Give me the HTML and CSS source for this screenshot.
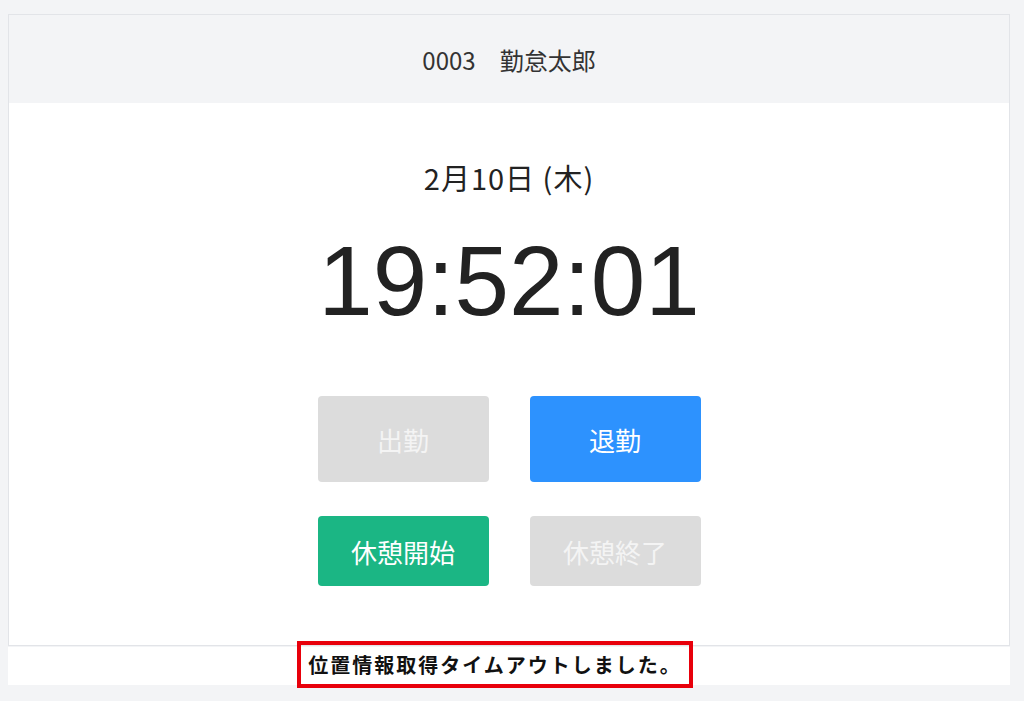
FILE: index.html
```html
<!DOCTYPE html>
<html lang="ja">
<head>
<meta charset="utf-8">
<title>勤怠打刻</title>
<link rel="stylesheet" href="styles.css">
</head>
<body>
<div class="page">
  <div class="card">
    <div class="card-header">0003　勤怠太郎</div>
    <div class="card-body">
      <div class="date">2月10日 (木)</div>
      <div class="clock">19:52:01</div>
      <div class="buttons">
        <button class="btn btn-tall btn-disabled">出勤</button>
        <button class="btn btn-tall btn-blue">退勤</button>
        <button class="btn btn-short btn-green">休憩開始</button>
        <button class="btn btn-short btn-disabled">休憩終了</button>
      </div>
    </div>
  </div>
  <div class="message-band">
    <div class="message">位置情報取得タイムアウトしました。</div>
  </div>
</div>
</body>
</html>
```
FILE: styles.css
```css
html, body {
  margin: 0;
  padding: 0;
}
body {
  background: #f3f4f6;
  font-family: "Noto Sans CJK JP", "Noto Sans", sans-serif;
  color: #222;
  height: 701px;
  overflow: hidden;
}
.page {
  padding: 14px 14px 0 8px;
}
.card {
  background: #fff;
  border: 1px solid #e2e4e8;
}
.card-header {
  background: #f3f4f6;
  height: 88px;
  display: flex;
  align-items: center;
  justify-content: center;
  font-size: 24px;
  color: #333;
}
.card-body {
  display: flex;
  flex-direction: column;
  align-items: center;
  padding: 54px 0 59px;
}
.date {
  font-size: 29px;
  letter-spacing: 1px;
  line-height: 40px;
  color: #222;
}
.clock {
  font-family: "Liberation Sans", Arial, sans-serif;
  font-size: 98px;
  line-height: 116px;
  margin-top: 26px;
  color: #222;
}
.buttons {
  margin-top: 57px;
  display: grid;
  grid-template-columns: 171px 171px;
  column-gap: 41px;
  row-gap: 34px;
}
.btn {
  border: none;
  border-radius: 4px;
  font-family: "Noto Sans CJK JP", sans-serif;
  font-size: 26px;
  color: #fff;
  padding: 0;
}
.btn-tall { height: 86px; }
.btn-short { height: 70px; }
.btn-disabled { background: #dcdcdc; color: #f4f4f4; }
.btn-blue { background: #2d92fe; }
.btn-green { background: #1bb684; }
.message-band {
  background: #fff;
  height: 38px;
  margin-top: 1px;
  display: flex;
  justify-content: center;
}
.message {
  width: 388px;
  height: 39px;
  margin-top: -2px;
  margin-right: 28px;
  box-sizing: border-box;
  outline: 4px solid #e8000b;
  display: flex;
  align-items: center;
  justify-content: center;
  font-weight: bold;
  font-size: 20px;
  letter-spacing: 2px;
  color: #111;
}
```
